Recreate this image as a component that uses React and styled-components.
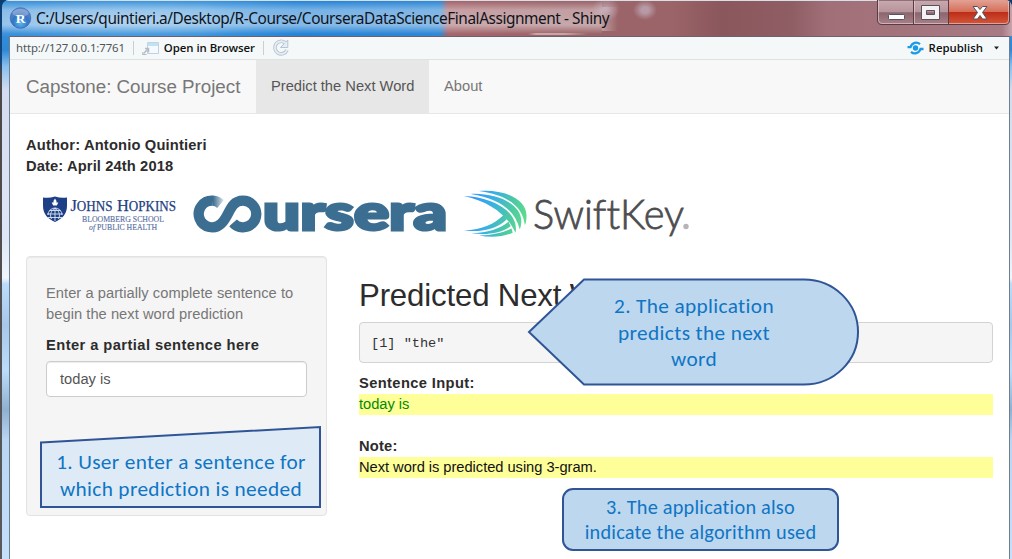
import React from 'react';
import styled, { createGlobalStyle } from 'styled-components';

const Global = createGlobalStyle`
  * { box-sizing: border-box; }
  body { margin: 0; background: #fff; overflow: hidden; font-variant-ligatures: none; }
  p, h2, pre, figure { margin: 0; }
`;

const Desktop = styled.div`
  width: 1012px;
  height: 559px;
  display: flex;
  padding-left: 2px;
  background: linear-gradient(180deg, #0b3e72 0, #12457c 60px, #4c4648 75px, #5a5a5c 100%);
  font-family: "Liberation Sans", Arial, sans-serif;
  overflow: hidden;
`;

const Window = styled.div`
  position: relative;
  width: 1010px;
  height: 559px;
  display: flex;
  flex-direction: column;
  border-radius: 7px 7px 0 0;
  overflow: hidden;
  background: linear-gradient(180deg, #3f97dc 0, #2f88d6 50px, #86bfee 66px, #d3dcf0 90px, #dfe6f6 240px,
    #f0f6fc 278px, #bcdcfb 284px, #a7c8ea 325px, #bcdcfb 370px, #90b0d2 410px, #b9d6f3 440px, #c4e0fb 559px);
`;

const TitleBar = styled.header`
  height: 36px;
  flex: none;
  display: flex;
  align-items: flex-start;
  border-top: 1px solid #d9dfe6;
  background:
    radial-gradient(ellipse 14px 12px at 604px 8px, rgba(206,188,204,.7), transparent),
    radial-gradient(ellipse 12px 10px at 643px 9px, rgba(192,172,186,.75) 30%, transparent),
    linear-gradient(90deg, transparent, rgba(255,255,255,.42) 8px, rgba(255,255,255,.42) 36px, transparent 60px) 526px 32px / 60px 2px no-repeat,
    linear-gradient(180deg, transparent 0, rgba(255,255,255,.38) 9px, rgba(255,255,255,.44) 24px, transparent 33px) 0 0 / 600px 100% no-repeat,
    linear-gradient(90deg, rgba(255,255,255,.36), transparent) 600px 6px / 16px 24px no-repeat,
    radial-gradient(ellipse 150px 20px at 120px 19px, rgba(255,255,255,.3), transparent),
    linear-gradient(90deg, #3a91da 0, #3c94dc 200px, #2583d6 300px, #2f88d6 438px, #a4656c 446px, #9b6469 560px,
      #9b6468 670px, #8a575c 720px, #8f5d64 790px, #a16f77 825px, #a77a84 1000px, #c8a4ac 1010px);
`;

const RLogo = styled.svg`
  width: 23px;
  height: 22px;
  margin: 6px 0 0 7px;
`;

const Title = styled.span`
  margin: 7px 0 0 4px;
  font: 15.4px/22px "Noto Sans", "Open Sans", sans-serif;
  letter-spacing: ${(p) => p.$track}px;
  color: #10131a;
  white-space: nowrap;
`;

const WindowButtons = styled.svg`
  position: absolute;
  left: 875px;
  top: 0;
  width: 134px;
  height: 26px;
`;

const Frame = styled.div`
  flex: 1;
  display: flex;
  flex-direction: column;
  width: 1001px;
  margin-left: 7px;
  border: 1px solid #6e7f90;
  border-top-color: #705f6c;
  border-bottom: 0;
  background: #fff;
`;

const Toolbar = styled.div`
  height: 23px;
  flex: none;
  display: flex;
  align-items: center;
  padding: 0 10px 0 6px;
  background: #f4f8f9;
  border-bottom: 1px solid #dce3e3;
`;

const Tool = styled.span`
  font: ${(p) => (p.$strong ? 600 : 400)} ${(p) => p.$size}px/20px ${(p) => (p.$strong ? '"Open Sans"' : '"Noto Sans"')}, sans-serif;
  letter-spacing: ${(p) => p.$track || 0}px;
  color: ${(p) => (p.$strong ? '#101010' : '#505558')};
  white-space: nowrap;
`;

const Divider = styled.i`
  width: 1px;
  height: 14px;
  margin: 0 8px;
  background: #c9cfd2;
`;

const Republish = styled.div`
  display: flex;
  align-items: center;
  gap: 5px;
  margin-left: auto;
`;

const MenuArrow = styled.svg`
  width: 5px;
  height: 4px;
  margin-left: 6px;
`;

const Navbar = styled.nav`
  height: 54px;
  flex: none;
  display: flex;
  align-items: stretch;
  background: #f8f8f8;
  border-bottom: 1px solid #e7e7e7;
  color: #777;
`;

const Brand = styled.span`
  width: 246px;
  padding-left: 16px;
  font-size: 18.8px;
  line-height: 53px;
  letter-spacing: ${(p) => p.$track}px;
  white-space: nowrap;
`;

const Tab = styled.span`
  padding: 0 0 0 15px;
  width: ${(p) => p.$width}px;
  font-size: 14.7px;
  line-height: 53px;
  background: ${(p) => (p.$active ? '#e7e7e7' : 'transparent')};
  color: ${(p) => (p.$active ? '#555' : '#777')};
  white-space: nowrap;
`;

const Page = styled.main`
  padding: 21px 16px 0;
  font-size: 14.7px;
  line-height: 21px;
  color: #333;
`;

const Strong = styled.p`
  font-weight: 700;
  letter-spacing: ${(p) => p.$track || 0}px;
  color: #2c2c2c;
`;

const Logos = styled.div`
  display: flex;
  height: 60px;
  margin: 10px 0 9px;

  svg {
    overflow: visible;
  }
`;

const Columns = styled.div`
  display: flex;
  gap: 32px;
  align-items: flex-start;
`;

const Well = styled.aside`
  width: 301px;
  height: 260px;
  padding: 26px 19px 0;
  background: #f5f5f5;
  border: 1px solid #e3e3e3;
  border-radius: 4px;
  box-shadow: inset 0 1px 1px rgba(0, 0, 0, 0.05);
`;

const Help = styled.p`
  color: #777;
  margin-bottom: 10px;
  letter-spacing: 0.04px;
`;

const Input = styled.div`
  width: 261px;
  height: 36px;
  margin-top: 5px;
  padding: 0 13px;
  line-height: 34px;
  color: #555;
  background: #fff;
  border: 1px solid #ccc;
  border-radius: 4px;
  box-shadow: inset 0 1px 1px rgba(0, 0, 0, 0.075);
`;

const Results = styled.section`
  width: 635px;
`;

const Heading = styled.h2`
  margin: 22px 0 9px;
  font-size: 31.2px;
  line-height: 35px;
  font-weight: 400;
  letter-spacing: -0.16px;
  color: #2c2c2c;
  white-space: nowrap;
`;

const Output = styled.pre`
  height: 41px;
  margin-bottom: 10px;
  padding-left: 11px;
  font: 13.6px/41px "Liberation Mono", monospace;
  background: #f5f5f5;
  border: 1px solid #d3d3d3;
  border-radius: 4px;
`;

const Highlight = styled.p`
  height: 21px;
  margin-bottom: 21px;
  background: #ffff99;
  letter-spacing: -0.04px;
  color: ${(p) => p.$color};
`;

const Callout = styled.figure`
  position: absolute;
  left: ${(p) => p.$x - 2}px;
  top: ${(p) => p.$y}px;
  width: ${(p) => p.$w}px;
  height: ${(p) => p.$h}px;
`;

const CalloutShape = styled.svg`
  position: absolute;
  inset: 0;
  width: 100%;
  height: 100%;
  stroke: #2f5597;
  stroke-width: 2;
`;

const CalloutText = styled.figcaption`
  position: relative;
  padding-top: ${(p) => p.$top}px;
  font: ${(p) => p.$size}px/${(p) => p.$lh}px Carlito, Lato, sans-serif;
  letter-spacing: ${(p) => p.$track || 0}px;
  text-align: center;
  white-space: pre;
  color: #0f75c4;
`;

const fit = (w) => ({ textLength: w, lengthAdjust: 'spacingAndGlyphs' });

const HopkinsLogo = () => (
  <svg width="157" height="60" viewBox="26 188 157 60">
    <path d="M43 198.500Q49 199.500 55 197.500Q61 199.500 67 198.500V207C67 215 62 220 55 223C48 220 43 215 43 207Z" fill="#1c3f86" />
    <path d="M55 199.500c1 2 2 2 1.300 4h2l-1.500 3h-3.600l-1.500-3h2c-.7-2 .3-2 1.300-4Z" fill="#fff" />
    <g fill="none" stroke="#dfe7f5" strokeWidth=".9">
      <path d="M48 216a7 7 0 0 1 14 0M55 209v13M47 215h16M48 218.500h14M51.500 220c-2-4-.8-8 3.500-11c4.300 3 5.500 7 3.500 11M49.500 211.500h11" />
    </g>
    <g fill="#24407f" stroke="#24407f" strokeWidth=".25" fontFamily="Liberation Serif, serif">
      <text x="70.500" y="211.500" fontSize="17.500" {...fit(42)}>J<tspan fontSize="14">OHNS</tspan></text>
      <text x="117" y="211.500" fontSize="17.500" {...fit(59)}>H<tspan fontSize="14">OPKINS</tspan></text>
      <g fill="#5a70a3" stroke="#5a70a3" strokeWidth=".15">
        <text x="82" y="222.700" fontSize="9" {...fit(82)}>BLOOMBERG SCHOOL</text>
        <text x="89" y="230.800" fontSize="9" {...fit(68)}><tspan fontStyle="italic">of</tspan> PUBLIC HEALTH</text>
      </g>
    </g>
  </svg>
);

const CourseraLogo = () => (
  <svg width="270" height="60" viewBox="183 188 270 60">
    <defs>
      <linearGradient id="tail" x1="213" y1="203" x2="224" y2="203" gradientUnits="userSpaceOnUse">
        <stop offset="0" stopColor="#3c6e91" /><stop offset="1" stopColor="#3c6e91" stopOpacity=".15" />
      </linearGradient>
    </defs>
    <g fill="none" stroke="#3c6e91" strokeWidth="10.300">
      <path d="M213 201.700A13.300 13.300 0 1 0 221.500 224.300C227 219 229 210.500 233.500 205.700A13.300 13.300 0 1 1 233 223.800" />
      <path d="M212.800 201.700Q217 202 220.500 205" stroke="url(#tail)" />
    </g>
    <path d="M227 229.500L235.500 216" stroke="#fff" strokeWidth="1.500" />
    <text x="263" y="230.700" fontSize="50" fontWeight="900" fontFamily="Lato, sans-serif" fill="#3c6e91"
      stroke="#3c6e91" strokeWidth="3" strokeLinejoin="miter" {...fit(184)}>ursera</text>
  </svg>
);

const SwiftKeyLogo = () => (
  <svg width="240" height="60" viewBox="453 188 240 60">
    <defs>
      <linearGradient id="swift" x1="464" y1="200" x2="526" y2="218" gradientUnits="userSpaceOnUse">
        <stop offset="0" stopColor="#2f8ffb" /><stop offset=".4" stopColor="#38adea" />
        <stop offset=".75" stopColor="#4cc9a4" /><stop offset="1" stopColor="#5bdc8c" />
      </linearGradient>
    </defs>
    <g fill="url(#swift)">
      <path d="M479 192C504 190 527 200 526.500 217C526.500 222 525.500 225 524.800 226C523 208 508 196 479 192Z" />
      <path d="M471 194.900C499 194 522 206 521.300 223C521 227 520.300 229 519.800 230.500C515 211 499 199.500 471 194.900Z" />
      <path d="M464 197C492 198 518 212 515.800 232L515.300 233.500C508 217 490 202.500 464 197Z" />
      <path d="M464 231.700C483 230.500 494 225 503.500 216.300L506.800 220.200C498 229 485 233.500 464 231.700Z" />
      <path d="M471 234.200C488 233.700 500 229.700 508.500 222.700L510.700 227.200C501 233.800 488 236.500 471 234.200Z" />
      <path d="M479 236.500C493 236 503 233.300 511.500 229.500L512.700 233.700C503 238 491 238.700 479 236.500Z" />
    </g>
    <text x="533" y="230" fontSize="42" fontWeight="300" fontFamily="Lato, sans-serif" fill="#4d4d4f"
      stroke="#4d4d4f" strokeWidth=".8" {...fit(151)}>SwiftKey</text>
    <circle cx="686" cy="227.500" r="2.700" fill="#b5b5b5" />
  </svg>
);

const BrowserIcon = styled.svg`
  width: 17px;
  height: 15px;
  margin-right: 5px;
`;

export default function App() {
  return (
    <Desktop>
      <Global />
      <Window>
        <TitleBar>
          <RLogo viewBox="0 0 23 22">
            <defs>
              <radialGradient id="ball" cx=".5" cy=".75" r=".75">
                <stop offset="0" stopColor="#5ab4ee" /><stop offset=".5" stopColor="#3276c4" /><stop offset="1" stopColor="#6f8fc8" />
              </radialGradient>
            </defs>
            <circle cx="11.500" cy="11" r="10.300" fill="url(#ball)" stroke="#3c62ad" strokeWidth=".7" />
            <ellipse cx="11.500" cy="6" rx="8" ry="4" fill="#fff" opacity=".25" />
            <text x="11.700" y="15.500" fontSize="13.500" fontWeight="700" textAnchor="middle" fontFamily="Liberation Serif, serif" fill="#fff">R</text>
          </RLogo>
          <Title $track={-0.44}>C:/Users/quintieri.a/Desktop/R-Course/CourseraDataScienceFinalAssignment - Shiny</Title>
        </TitleBar>
        <WindowButtons viewBox="877 0 134 26">
          <defs>
            <linearGradient id="glass" x2="0" y2="1">
              <stop offset="0" stopColor="#c9aab0" /><stop offset=".48" stopColor="#b7949b" />
              <stop offset=".52" stopColor="#8a666f" /><stop offset="1" stopColor="#a98088" />
            </linearGradient>
            <linearGradient id="red" x2="0" y2="1">
              <stop offset="0" stopColor="#e3a294" /><stop offset=".48" stopColor="#d56f5a" />
              <stop offset=".52" stopColor="#bd2d17" /><stop offset="1" stopColor="#d4573a" />
            </linearGradient>
          </defs>
          <path d="M877.500 0V20Q877.500 24.500 882 24.500H1005Q1009.500 24.500 1009.500 20V0Z" fill="url(#glass)" stroke="#5a3b43" />
          <path d="M948.500 0H1009V20Q1009 24 1005 24H948.500Z" fill="url(#red)" />
          <path d="M878.500 0V20Q878.500 23.500 882 23.500H1005Q1008.500 23.500 1008.500 20V0" fill="none" stroke="#ead5d8" strokeOpacity=".6" />
          <path d="M913.500 0V24M948.500 0V24" stroke="#5a3b43" />
          <path d="M914.500 1V23" stroke="#ead5d8" strokeOpacity=".6" />
          <rect x="888.500" y="14.500" width="16" height="5" rx="1" fill="#fff" stroke="#56525f" />
          <path d="M921.500 5.500h18v14h-18ZM926.500 10.500h8v4h-8Z" fill="#f5f1f2" fillRule="evenodd" stroke="#56525f" />
          <path d="M973 6.500h4.500l2.500 3 2.500-3h4.500l-4.500 6 4.500 6.500h-4.500l-2.500-3.500-2.500 3.500h-4.500l4.500-6.500Z" fill="#fff" stroke="#56525f" />
        </WindowButtons>
        <Frame>
          <Toolbar>
            <Tool $size={11.4} $track={-0.11}>http://127.0.0.1:7761</Tool>
            <Divider />
            <BrowserIcon viewBox="0 0 17 15">
              <path d="M5.500 1.500h11v11h-11Z" fill="#f4faff" stroke="#c3d2de" />
              <path d="M6 2h10v3H6Z" fill="#bfe2f8" />
              <path d="M1.500 12.500L5.500 8.500M3 7.500h3.500v4" fill="none" stroke="#b4bbc2" strokeWidth="1.500" />
              <path d="M.5 11.500v2h4" fill="none" stroke="#b4bbc2" />
            </BrowserIcon>
            <Tool $strong $size={11.4} $track={-0.05}>Open in Browser</Tool>
            <Divider />
            <svg width="18" height="18" viewBox="0 0 18 18" fill="none">
              <path d="M14 4.500A6.300 6.300 0 1 0 15 11" stroke="#b7c3d2" strokeWidth="3.600" />
              <path d="M15.800 1v7.500H8.500Z" fill="#e6eef5" stroke="#b7c3d2" />
              <path d="M14 4.500A6.300 6.300 0 1 0 15 11" stroke="#e6eef5" strokeWidth="1.800" />
            </svg>
            <Republish>
              <svg width="17" height="14" viewBox="0 0 17 14">
                <circle cx="8.500" cy="7" r="2.700" fill="#1b9ae8" />
                <path d="M.5 6.200H3.500C5 1.300 10 .5 13 3.200M16.500 8H13.500C12 12.700 7 13.500 4 10.800" fill="none" stroke="#1b9ae8" strokeWidth="2.300" />
              </svg>
              <Tool $strong $size={11.4}>Republish</Tool>
              <MenuArrow viewBox="0 0 5 4"><path d="M0 .5h5L2.500 3.500Z" fill="#222" /></MenuArrow>
            </Republish>
          </Toolbar>
          <Navbar>
            <Brand $track={-0.03}>Capstone: Course Project</Brand>
            <Tab $active $width={173}>Predict the Next Word</Tab>
            <Tab $width={80}>About</Tab>
          </Navbar>
          <Page>
            <Strong $track={0.17}>Author: Antonio Quintieri</Strong>
            <Strong $track={0.12}>Date: April 24th 2018</Strong>
            <Logos>
              <HopkinsLogo />
              <CourseraLogo />
              <SwiftKeyLogo />
            </Logos>
            <Columns>
              <Well>
                <Help>Enter a partially complete sentence to<br />begin the next word prediction</Help>
                <Strong $track={0.43}>Enter a partial sentence here</Strong>
                <Input>today is</Input>
              </Well>
              <Results>
                <Heading>Predicted Next Word</Heading>
                <Output>[1] "the"</Output>
                <Strong $track={0.38}>Sentence Input:</Strong>
                <Highlight $color="#008a00">today is</Highlight>
                <Strong $track={0.2}>Note:</Strong>
                <Highlight $color="#111">Next word is predicted using 3-gram.</Highlight>
              </Results>
            </Columns>
          </Page>
        </Frame>
        <Callout $x={39} $y={425} $w={284} $h={84}>
          <CalloutShape viewBox="39 425 284 84"><path d="M41 442.500L320 427V507H41Z" fill="#deeaf6" /></CalloutShape>
          <CalloutText $top={24} $size={21.3} $lh={27} $track={0.35}>{'1. User enter a sentence for\nwhich prediction is needed'}</CalloutText>
        </Callout>
        <Callout $x={527} $y={277} $w={334} $h={110}>
          <CalloutShape viewBox="527 277 334 110"><path d="M529 332L584 279.500H804C834 279.500 858 303 858 332S834 384.500 804 384.500H584Z" fill="#bdd7ee" /></CalloutShape>
          <CalloutText $top={16} $size={21.3} $lh={26.7} $track={0.35}>{'2. The application\npredicts the next\nword'}</CalloutText>
        </Callout>
        <Callout $x={561} $y={487} $w={279} $h={65}>
          <CalloutShape viewBox="561 487 279 65"><rect x="563" y="489" width="275" height="61" rx="10" fill="#bdd7ee" /></CalloutShape>
          <CalloutText $top={8} $size={20.3} $lh={25} $track={0.22}>{'3. The application also\nindicate the algorithm used'}</CalloutText>
        </Callout>
      </Window>
    </Desktop>
  );
}
